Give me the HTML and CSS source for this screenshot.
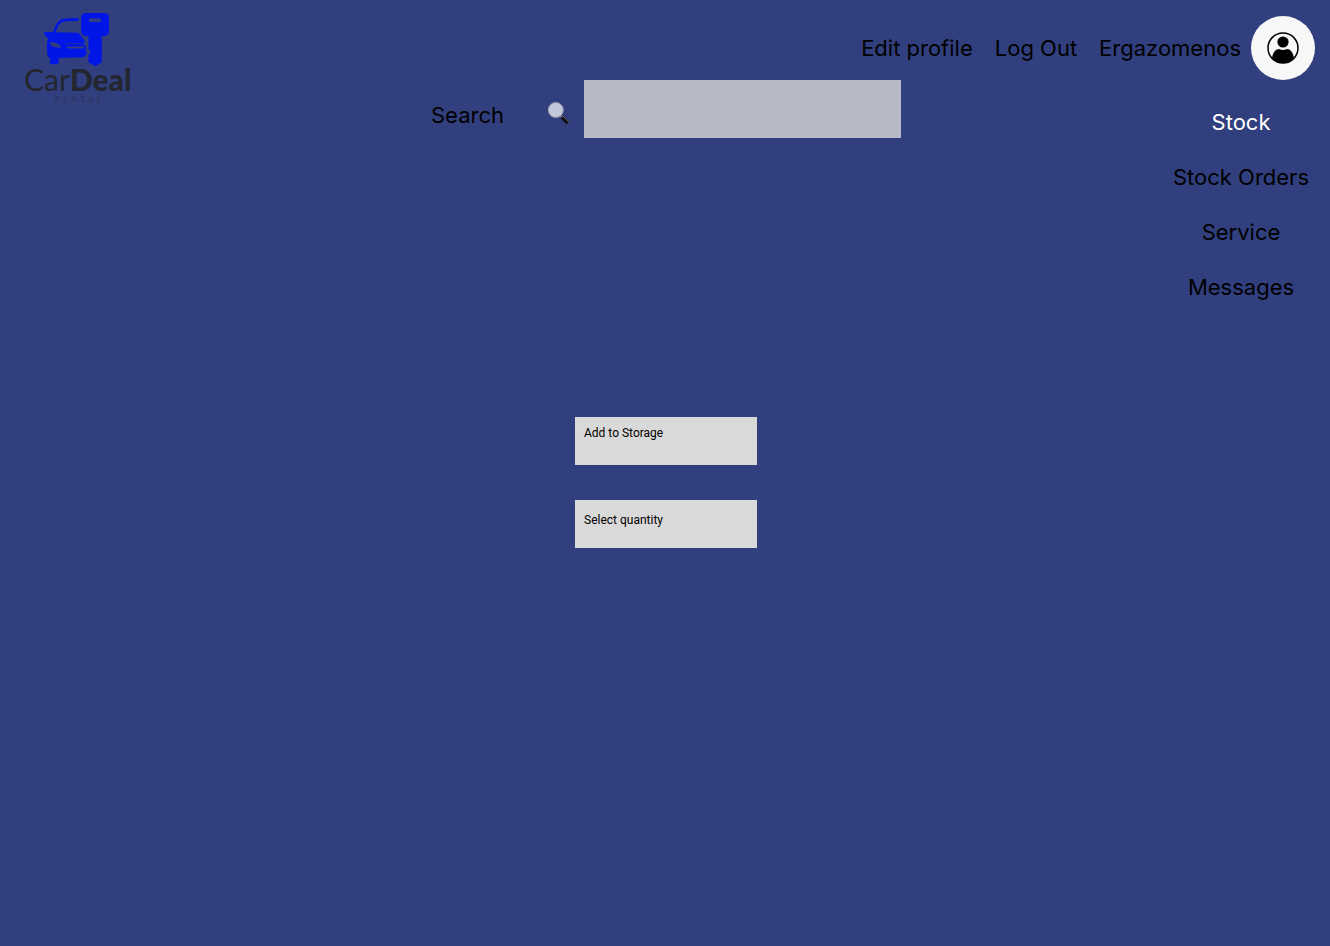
FILE: index.html
```html
<!DOCTYPE html>
<html lang="en">
<head>
<meta charset="utf-8">
<meta name="viewport" content="width=device-width, initial-scale=1">
<title>CarDeal Rental – Stock</title>
<link rel="stylesheet" href="styles.css">
</head>
<body>
<div class="page">
  <a class="logo" href="#" aria-label="CarDeal Rental">
    <svg class="logo-mark" viewBox="93 30 220 174" aria-hidden="true">
      <path class="logo-line" d="M132 100 C137 84 144 70 150 65 C155 60 162 58 203 58"/>
      <path class="logo-fill" fill-rule="evenodd" d="M103 98 Q103 95 108 95 L130 97 L205 98 Q214 104 216 112 L224 121 Q227 128 222 132 L230 145 L227 152 L232 160 L222 172 L146 174 V187 Q146 193 140 193 H125 Q120 193 120 187 V174 Q112 171 112 164 L111 135 Q110 124 116 115 L107 109 Q102 105 103 98 Z M120 126 C128 125 142 129 149 135 Q153 139 152 143 L131 141 Q121 139 120 126 Z M160 128 Q192 132 221 128 L222 130 Q190 134 162 130 Z M168 140 L224 139 L221 146 L178 146 Q170 145 168 140 Z"/>
      <path class="logo-key" fill-rule="evenodd" d="M229 39 H283 Q298 39 298 53 V94 Q298 108 284 108 H276 V187 L257 199 L236 187 V165 L243 157 L236 149 V108 H228 Q214 108 214 94 V53 Q214 39 229 39 Z M238 55 V66 H273 V55 Z"/>
    </svg>
    <span class="logo-name">Car<b>Deal</b></span>
    <span class="logo-sub">RENTAL</span>
  </a>

  <nav class="topnav" aria-label="Account">
    <a href="#">Edit profile</a>
    <a href="#">Log Out</a>
    <span class="user">
      <a href="#">Ergazomenos</a>
      <button class="avatar" type="button" aria-label="Account">
        <svg viewBox="0 0 32 32" aria-hidden="true">
          <circle class="avatar-ring" cx="16" cy="16" r="15"/>
          <circle cx="16" cy="10" r="5.6"/>
          <path d="M5 26 C6 20 9 17 12 17 Q16 19 20 17 C23 17 26 20 27 26 Q22 31 16 31 Q10 31 5 26 Z"/>
        </svg>
      </button>
    </span>
  </nav>

  <main class="content">
    <form class="search" role="search">
      <label for="q">Search</label>
      <svg class="glass" viewBox="0 0 24 24" aria-hidden="true">
        <path class="glass-neck" d="M13 14 L16 17"/>
        <path class="glass-handle" d="M15 16 L21 22"/>
        <path class="glass-shine" d="M16 15 L22 21"/>
        <circle class="glass-lens" cx="8.8" cy="9" r="7.5"/>
      </svg>
      <input id="q" type="search">
    </form>
    <form class="storage">
      <button class="field add" type="button">Add to Storage</button>
      <select class="field quantity" aria-label="Select quantity">
        <option>Select quantity</option>
      </select>
    </form>
  </main>

  <nav class="sidenav" aria-label="Sections">
    <a class="active" href="#" aria-current="page">Stock</a>
    <a href="#">Stock Orders</a>
    <a href="#">Service</a>
    <a href="#">Messages</a>
  </nav>
</div>
</body>
</html>
```
FILE: styles.css
```css
* { box-sizing: border-box; }

body {
  margin: 0;
  background: #313f7e;
  color: #000;
  font: 22px/28px Inter, "Liberation Sans", sans-serif;
}

a { color: inherit; text-decoration: none; }

.page {
  display: grid;
  grid-template-columns: 180px 1fr 178px;
  grid-template-rows: 80px auto;
  min-height: 100vh;
}

.logo {
  grid-row: 1 / 3;
  justify-self: start;
  display: flex;
  flex-direction: column;
  align-items: center;
  padding: 10px 0 0 24px;
  color: #23262e;
}
.logo-mark { width: 73px; height: 58px; }
.logo-fill, .logo-key { fill: #0016e6; }
.logo-line { fill: none; stroke: #0016e6; stroke-width: 8; stroke-linecap: round; }
.logo-name { font: 30px/22px Lato, sans-serif; }
.logo-name b { font-weight: 900; }
.logo-sub {
  padding-left: 4px;
  font: 7px/18px Lato, sans-serif;
  letter-spacing: 4px;
  color: #2a315b;
}

.topnav {
  grid-column: 2 / 4;
  display: flex;
  justify-content: flex-end;
  align-items: center;
  gap: 22px;
  padding: 16px 15px 0 0;
}
.user { display: flex; align-items: center; gap: 10px; }
.avatar {
  display: grid;
  place-items: center;
  width: 64px;
  height: 64px;
  padding: 0;
  border: 0;
  border-radius: 50%;
  background: #f7f7f7;
}
.avatar svg { width: 32px; height: 32px; }
.avatar-ring { fill: none; stroke: #000; stroke-width: 1.5; }

.content {
  grid-column: 2;
  display: flex;
  flex-direction: column;
  align-items: center;
  gap: 279px;
}
.search { display: flex; align-items: center; }
.search label { padding-top: 12px; }
.glass { width: 24px; height: 24px; margin: 8px 13px 0 43px; }
.glass-lens { fill: #c3c8dd; stroke: #949aaa; stroke-width: 1; }
.glass-neck { stroke: #777b84; stroke-width: 2; }
.glass-handle { stroke: #101218; stroke-width: 4; }
.glass-shine { stroke: #6b6e74; stroke-width: 1; }
.search input {
  width: 317px;
  height: 58px;
  padding: 0 16px;
  border: 0;
  border-radius: 0;
  background: #b7b9c7;
  font: inherit;
}

.storage { display: flex; flex-direction: column; gap: 35px; }
.field {
  appearance: none;
  width: 182px;
  height: 48px;
  border: 0;
  border-radius: 0;
  background: #d9d9d9;
  color: #000;
  font: 12px/16px Roboto, sans-serif;
  text-align: left;
}
.add { padding: 0 9px 16px; }
.quantity { padding: 0 9px 8px; }

.sidenav {
  grid-column: 3;
  display: flex;
  flex-direction: column;
  align-items: center;
  gap: 27px;
  padding-top: 28px;
}
.active { color: #fff; }
```
